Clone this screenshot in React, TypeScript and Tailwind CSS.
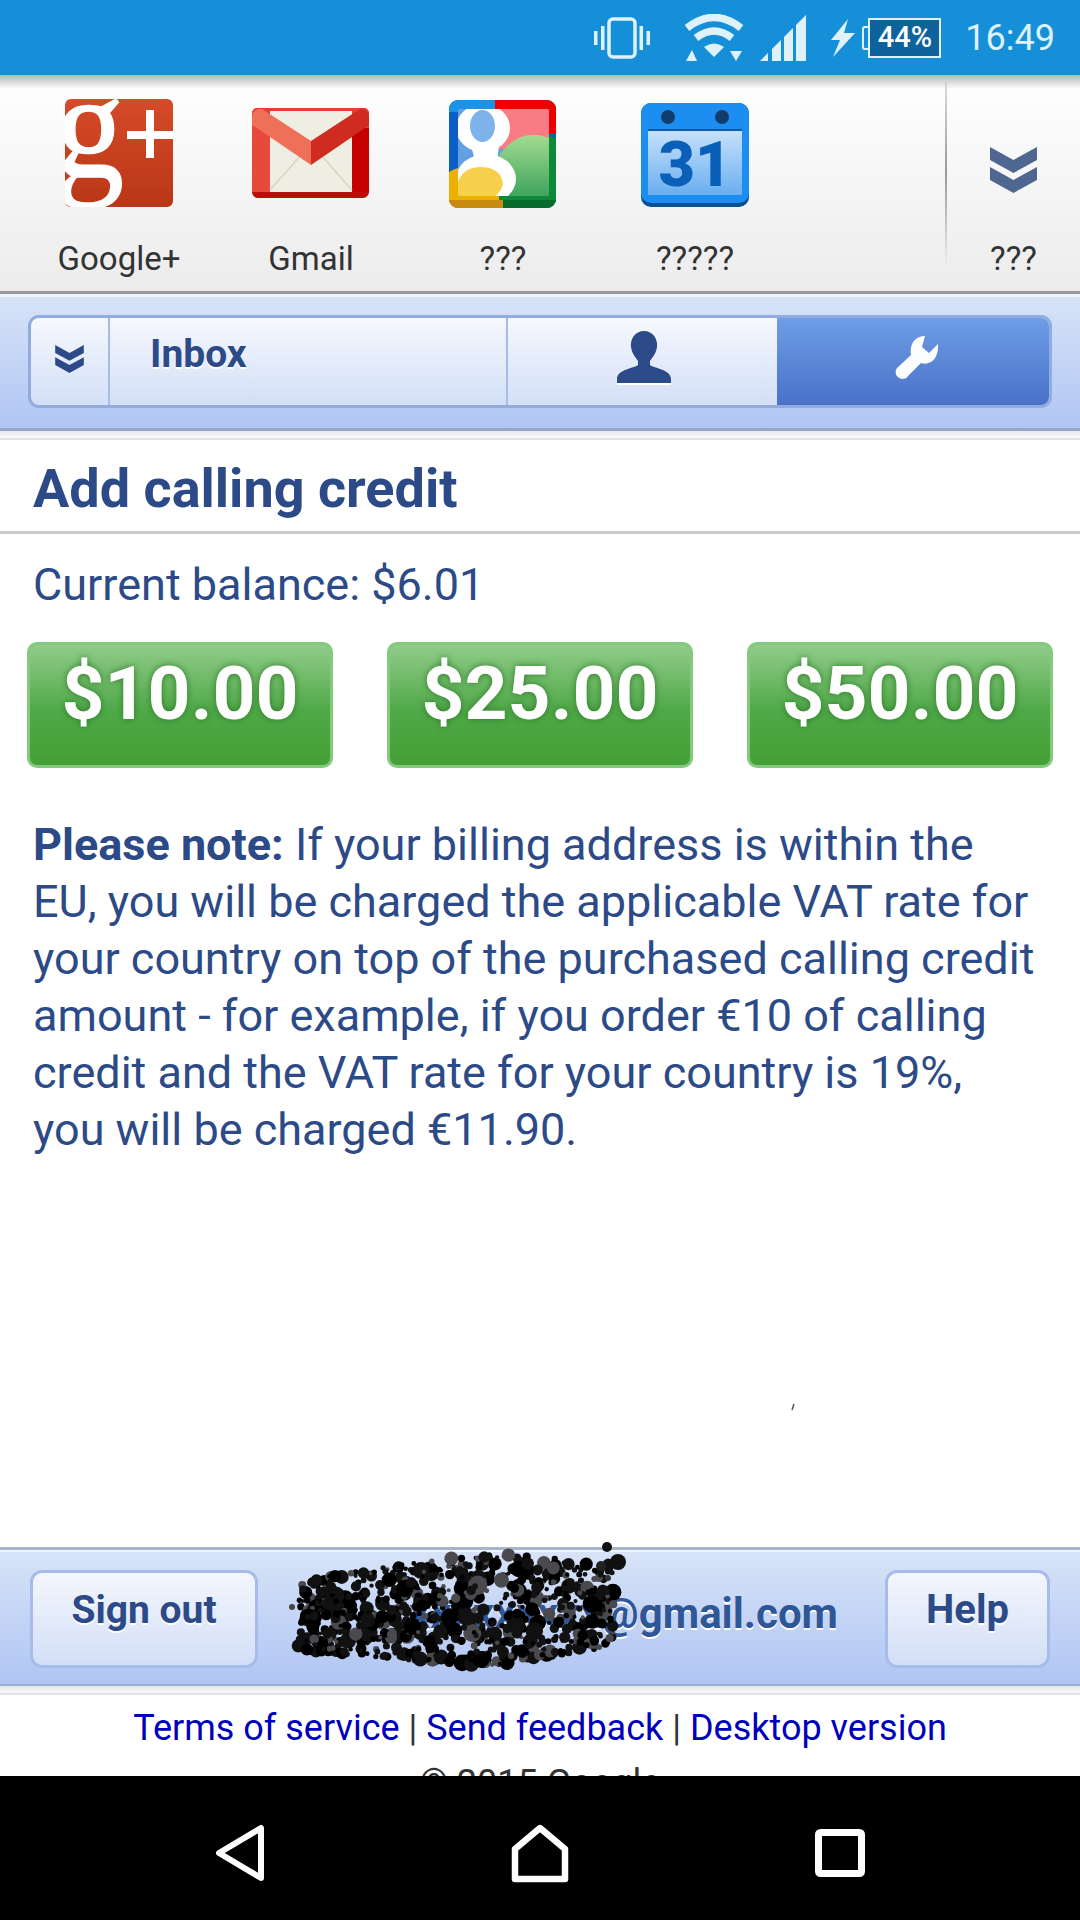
const font = { fontFamily: "Roboto, sans-serif" };

// speckle over the blacked out address, fixed seed so it never moves
function makeDots() {
  const dots: { x: number; y: number; r: number; fill: string }[] = [];
  let seed = 4711;
  const rnd = () => {
    seed = (seed * 1103515245 + 12345) & 0x7fffffff;
    return seed / 0x7fffffff;
  };
  for (let i = 0; i < 860; i++) {
    const x = 298 + rnd() * 316;
    const band = 1 - Math.abs((x - 480) / 180);
    const mid = 1616 - (x - 298) * 0.035;
    const y = mid + (rnd() - 0.5) * (70 + band * 46);
    const r = 2 + rnd() * rnd() * 8;
    const fill = rnd() > 0.84 ? "#4a4a4e" : rnd() > 0.5 ? "#111" : "#000";
    dots.push({ x, y, r, fill });
  }
  return dots;
}
const dots = makeDots();

function StatusBar() {
  return (
    <div className="h-[75px] bg-[#1590d8] flex items-center justify-end pr-[25px] text-[#dff1fb] shrink-0">
      <svg width="56" height="42" viewBox="0 0 56 42" fill="none">
        <rect x="15" y="2" width="26" height="38" rx="4" stroke="#dff1fb" strokeWidth="3.5" />
        <rect x="0" y="14" width="3.5" height="14" fill="#dff1fb" />
        <rect x="7" y="9" width="3.5" height="24" fill="#dff1fb" />
        <rect x="45.5" y="9" width="3.5" height="24" fill="#dff1fb" />
        <rect x="52.5" y="14" width="3.5" height="14" fill="#dff1fb" />
      </svg>
      <svg className="ml-[34px]" width="60" height="48" viewBox="0 0 60 48" fill="none">
        <path d="M3 14 Q30 -7 57 14" stroke="#dff1fb" strokeWidth="7.5" />
        <path d="M12 24 Q30 10 48 24" stroke="#dff1fb" strokeWidth="7.5" />
        <path d="M20 33 Q30 26 40 33 L30 43 Z" fill="#dff1fb" />
        <path d="M2 47 L8 36 L13 47 Z M46 37 L58 37 L52 47 Z" fill="#dff1fb" />
      </svg>
      <svg className="ml-[16px]" width="46" height="46" viewBox="0 0 46 46">
        <path d="M0 46 L8 38 V46 Z" fill="#dff1fb" />
        <path d="M12 34 L21 25 V46 H12 Z" fill="#dff1fb" />
        <path d="M24 22 L33 13 V46 H24 Z" fill="#dff1fb" />
        <path d="M36 10 L46 0 V46 H36 Z" fill="#dff1fb" />
      </svg>
      <svg className="ml-[25px]" width="24" height="38" viewBox="0 0 24 38">
        <path d="M17 0 L0 21 H9 L2 38 L24 14 H13 Z" fill="#dff1fb" />
      </svg>
      <div className="ml-[7px] flex items-center">
        <div className="w-[6px] h-[24px] border-2 border-r-0 border-[#dff1fb] rounded-l-[3px]" />
        <div className="w-[73px] h-[40px] border-2 border-[#dff1fb] bg-[#0f639d] flex items-center justify-center text-[29px] font-medium text-white">
          44%
        </div>
      </div>
      <div className="ml-[24px] text-[36px] leading-none">16:49</div>
    </div>
  );
}

function GooglePlusIcon() {
  return (
    <svg width="108" height="108" viewBox="0 0 108 108">
      <defs>
        <linearGradient id="gp" x1="0" y1="0" x2="0" y2="1">
          <stop offset="0" stopColor="#d64a28" />
          <stop offset="1" stopColor="#b93716" />
        </linearGradient>
        <clipPath id="gpc">
          <rect width="108" height="108" rx="6" />
        </clipPath>
      </defs>
      <rect width="108" height="108" rx="6" fill="url(#gp)" />
      <g clipPath="url(#gpc)">
        <text x="0" y="0" transform="translate(-10 78) scale(0.92 1)" fontFamily="Liberation Serif" fontSize="150" stroke="#fff" strokeWidth="1.5" fill="#fff">g</text>
        <rect x="62" y="32" width="46" height="8" fill="#fff" />
        <rect x="81" y="11" width="8" height="48" fill="#fff" />
      </g>
    </svg>
  );
}

function GmailIcon() {
  return (
    <svg width="118" height="90" viewBox="0 0 118 90">
      <rect x="0" y="0" width="117" height="90" rx="6" fill="#b70f0a" />
      <rect x="0" y="0" width="117" height="84" rx="5" fill="#e53f30" />
      <rect x="100" y="20" width="17" height="64" fill="#c40000" />
      <rect x="0" y="16" width="18" height="68" fill="#e64a3a" />
      <rect x="18" y="3" width="82" height="81" fill="#eeeee2" />
      <path d="M18 82 L50 46 M100 82 L68 46" stroke="#d6d6c6" strokeWidth="1.5" />
      <path d="M59 33 L108 1 Q117 0 117 10 V17 L100 29 L59 57 Z" fill="#d02b20" />
      <path d="M0 10 Q0 0 10 1 L59 33 V57 L18 29 L0 17 Z" fill="#ee7058" />
    </svg>
  );
}

function GoogleIcon() {
  return (
    <svg width="108" height="108" viewBox="0 0 108 108">
      <defs>
        <clipPath id="gc">
          <rect width="107" height="108" rx="9" />
        </clipPath>
        <clipPath id="gi">
          <rect x="9" y="9" width="91" height="87" rx="2" />
        </clipPath>
        <linearGradient id="gg" x1="0" y1="0" x2="0" y2="1">
          <stop offset="0" stopColor="#a4dc90" />
          <stop offset="1" stopColor="#3ea45c" />
        </linearGradient>
      </defs>
      <g clipPath="url(#gc)">
        <rect width="108" height="108" fill="#0a5fc4" />
        <path d="M0 0 H50 L46 12 H0 Z" fill="#1d93e6" />
        <path d="M46 0 H108 V34 L46 34 Z" fill="#ee0000" />
        <path d="M0 72 Q18 62 34 68 L56 100 L50 108 H0 Z" fill="#eeb000" />
        <path d="M50 56 Q72 26 108 38 V108 H50 Z" fill="#0c8a3a" />
        <rect x="0" y="100" width="54" height="8" fill="#c98a10" />
        <rect x="54" y="100" width="54" height="8" fill="#066b2c" />
      </g>
      <g clipPath="url(#gi)">
        <rect x="9" y="9" width="91" height="87" fill="#649fe4" />
        <rect x="50" y="9" width="50" height="40" fill="#f97b84" />
        <path d="M48 58 Q70 26 100 38 V96 H48 Z" fill="url(#gg)" />
        <ellipse cx="34" cy="28" rx="27" ry="24" fill="#fff" />
        <path d="M22 46 H50 L48 60 H26 Z" fill="#fff" />
        <ellipse cx="37" cy="79" rx="30" ry="25" fill="#fff" />
        <ellipse cx="33.5" cy="26" rx="12.5" ry="16" fill="#7db3ea" />
        <path d="M8 96 V84 Q14 67 31 67 Q52 67 54 84 Q52 92 46 96 Z" fill="#f6d04d" />
      </g>
    </svg>
  );
}

function CalendarIcon() {
  return (
    <svg className="mt-[4px]" width="108" height="104" viewBox="0 0 108 104">
      <defs>
        <linearGradient id="cal" x1="0" y1="0" x2="0" y2="1">
          <stop offset="0" stopColor="#c8e2fb" />
          <stop offset="1" stopColor="#69aef0" />
        </linearGradient>
      </defs>
      <rect width="108" height="104" rx="10" fill="#0a4f92" />
      <rect width="108" height="100" rx="10" fill="#1c8ef2" />
      <rect x="7" y="27" width="94" height="65" fill="url(#cal)" />
      <rect x="7" y="26" width="94" height="2" fill="#0d5fa8" />
      <circle cx="27" cy="14" r="7" fill="#113d6e" />
      <circle cx="81" cy="14" r="7" fill="#113d6e" />
      <text x="54" y="83" textAnchor="middle" fontFamily="Roboto" fontWeight="900" fontSize="63" fill="#0a5fb8">31</text>
    </svg>
  );
}

function Chevrons({ w, h, color }: { w: number; h: number; color: string }) {
  return (
    <svg width={w} height={h} viewBox="0 0 47 46">
      <path d="M0 0 L23.5 13 L47 0 V13 L23.5 26 L0 13 Z" fill={color} />
      <path d="M0 20 L23.5 33 L47 20 V33 L23.5 46 L0 33 Z" fill={color} />
    </svg>
  );
}

function AppItem({ label, icon, w }: { label: string; icon: React.ReactNode; w: string }) {
  return (
    <div className={`flex flex-col items-center shrink-0 ${w}`}>
      <div className="h-[132px] pt-[12px] flex items-start">{icon}</div>
      <div className="text-[33px] leading-[40px] text-[#333] mt-[20px]">{label}</div>
    </div>
  );
}

function AppBar() {
  return (
    <div className="h-[216px] shrink-0 relative bg-gradient-to-b from-[#fff] to-[#ececec] flex pl-[23px] pt-[12px]">
      <div className="absolute inset-x-0 top-0 h-[14px] bg-gradient-to-b from-[#b5b5b5] to-[#ffffff00]" />
      <AppItem label="Google+" icon={<GooglePlusIcon />} w="w-[192px]" />
      <AppItem label="Gmail" icon={<div className="pt-[9px]"><GmailIcon /></div>} w="w-[192px]" />
      <AppItem label="???" icon={<div className="pt-[1px]"><GoogleIcon /></div>} w="w-[192px]" />
      <AppItem label="?????" icon={<CalendarIcon />} w="w-[192px]" />
      <div className="w-[2px] h-[184px] ml-[154px] -mt-[5px] bg-gradient-to-b from-[#ddd] via-[#999] to-[#eee]" />
      <div className="flex flex-col items-center w-[134px]">
        <div className="h-[132px] pt-[60px]">
          <Chevrons w={47} h={46} color="#4f6691" />
        </div>
        <div className="text-[33px] leading-[40px] text-[#333] mt-[20px]">???</div>
      </div>
    </div>
  );
}

function NavTabs() {
  return (
    <div className="shrink-0 border-t-[3px] border-[#9a9a9a]">
      <div className="h-[3px] bg-[#eef2fb]" />
      <div className="h-[134px] border-b-[3px] border-[#97a6c4] bg-gradient-to-b from-[#d7e3f8] to-[#b0c5f3] px-[28px] pt-[18px]">
        <div className="h-[93px] flex rounded-[11px] border-[3px] border-[#93acdf] bg-gradient-to-b from-[#f6f8fd] to-[#d3dff7] overflow-hidden">
          <div className="w-[79px] flex items-center justify-center pb-[5px] border-r-2 border-[#a5bce8]">
            <Chevrons w={31} h={28} color="#2c4a87" />
          </div>
          <div className="w-[398px] pl-[40px] pt-[12px] text-[39px] leading-[48px] font-bold text-[#2c4a87] [text-shadow:0_2px_0_#fff] border-r-2 border-[#a5bce8]">
            Inbox
          </div>
          <div className="w-[269px] flex items-center justify-center pb-[8px] pl-[3px]">
            <svg width="54" height="54" viewBox="0 0 54 54">
              <path d="M27 0 C36 0 41 8 40 16 C39 23 35 27 33 30 V34 C35 37 54 38 54 48 V52 H0 V48 C0 38 19 37 21 34 V30 C19 27 15 23 14 16 C13 8 18 0 27 0 Z" fill="#2c4a87" />
              <rect x="0" y="52" width="54" height="2" fill="#fff" />
            </svg>
          </div>
          <div className="flex-1 flex items-center justify-center pb-[8px] pl-[8px] bg-gradient-to-b from-[#6f9de6] to-[#4971c9]">
            <svg width="44" height="44" viewBox="0 0 44 44">
              <path d="M30 0 C21 0 14 7 16 19 L2 32 C-1 36 1 42 7 43 C10 43 12 42 13 40 L26 27 C36 30 44 22 43 8 L34 17 L27 11 Z" fill="#fbfdff" />
            </svg>
          </div>
        </div>
      </div>
    </div>
  );
}

function Amount({ value }: { value: string }) {
  return (
    <div className="w-[306px] h-[126px] rounded-[10px] border-[3px] border-[#85c97f] bg-gradient-to-b from-[#90cc89] via-[#4fa947] via-55% to-[#44a035] text-center text-white text-[75px] font-bold leading-[96px] [text-shadow:0_0_7px_#2f7a2a]">
      {value}
    </div>
  );
}

function Footer() {
  return (
    <div className="shrink-0">
      <div className="h-[3px] bg-[#a5b5cc]" />
      <div className="h-[2px] bg-[#eef2fb]" />
      <div className="relative h-[134px] border-b-2 border-[#a0afcd] bg-gradient-to-b from-[#d7e3f8] to-[#b0c5f3] flex items-start pl-[30px] pr-[30px] pt-[18px]">
        <div className="w-[228px] h-[98px] rounded-[12px] border-[3px] border-[#a6bdea] bg-gradient-to-b from-[#f3f6fd] to-[#d3dff7] text-center text-[39px] leading-[74px] font-bold text-[#2c4a87] [text-shadow:0_2px_0_#fff]">
          Sign out
        </div>
        <div className="w-[580px] text-right text-[42px] leading-[80px] pt-[4px] font-bold text-[#2f5696] [text-shadow:0_2px_0_#fff] overflow-hidden whitespace-nowrap">
          xxxxxxxxx@gmail.com
        </div>
        <div className="ml-[47px] w-[165px] h-[98px] rounded-[12px] border-[3px] border-[#a6bdea] bg-gradient-to-b from-[#f3f6fd] to-[#d3dff7] text-center text-[40px] leading-[74px] font-bold text-[#2c4a87] [text-shadow:0_2px_0_#fff]">
          Help
        </div>
      </div>
      <div className="h-[9px] bg-gradient-to-b from-[#e3e6ea] to-[#fafafa] border-b-2 border-[#e2e4e8]" />
    </div>
  );
}

export default function App() {
  return (
    <div className="relative w-[1080px] h-[1920px] bg-white overflow-hidden flex flex-col" style={font}>
      <StatusBar />
      <AppBar />
      <NavTabs />
      <div className="h-[9px] shrink-0 bg-gradient-to-b from-[#e6e8ec] to-[#fbfbfb] border-b-2 border-[#e2e4e8]" />
      <h1 className="h-[94px] shrink-0 border-b-[3px] border-[#cbcbcb] pl-[33px] pt-[11px] text-[54px] leading-[76px] font-bold text-[#2c4a87]">
        Add calling credit
      </h1>
      <div className="flex-1 min-h-0">
        <p className="pl-[33px] pt-[23px] text-[45px] leading-[56px] text-[#2c4a87]">Current balance: $6.01</p>
        <div className="flex justify-between px-[27px] mt-[29px]">
          <Amount value="$10.00" />
          <Amount value="$25.00" />
          <Amount value="$50.00" />
        </div>
        <p className="pl-[33px] pr-[40px] mt-[48px] text-[45px] leading-[57px] text-[#2c4a87]">
          <b>Please note:</b> If your billing address is within the EU, you will be charged the applicable VAT rate for
          your country on top of the purchased calling credit amount - for example, if you order €10 of calling credit
          and the VAT rate for your country is 19%, you will be charged €11.90.
        </p>
      </div>
      <Footer />
      <div className="h-[81px] shrink-0 overflow-hidden text-center text-[36px] leading-[44px] text-[#333]">
        <div className="pt-[11px]">
          <span className="text-[#0000bb]">Terms of service</span> | <span className="text-[#0000bb]">Send feedback</span> |{" "}
          <span className="text-[#0000bb]">Desktop version</span>
        </div>
        <div className="pt-[11px]">© 2015 Google</div>
      </div>
      <div className="h-[144px] shrink-0 bg-black grid grid-cols-3 px-[90px] pt-[10px] items-center justify-items-center">
        <svg width="50" height="58" viewBox="0 0 50 58" fill="none">
          <path d="M46 4 V54 L4 29 Z" stroke="#fff" strokeWidth="6" strokeLinejoin="round" />
        </svg>
        <svg width="58" height="60" viewBox="0 0 58 60" fill="none">
          <path d="M29 5 L54 26 V56 H4 V26 Z" stroke="#fff" strokeWidth="6.5" strokeLinejoin="round" />
        </svg>
        <svg width="50" height="48" viewBox="0 0 50 48" fill="none">
          <rect x="3.5" y="3.5" width="43" height="41" rx="2" stroke="#fff" strokeWidth="7" />
        </svg>
      </div>
      {/* scribble hiding the address */}
      <svg className="absolute inset-0 pointer-events-none" width="1080" height="1920" viewBox="0 0 1080 1920">
        {dots.map((d, i) => (
          <circle key={i} cx={d.x} cy={d.y} r={d.r} fill={d.fill} />
        ))}
        <circle cx="607" cy="1547" r="5" fill="#111" />
        <circle cx="618" cy="1562" r="8" fill="#111" />
        <circle cx="601" cy="1566" r="5" fill="#222" />
        <circle cx="606" cy="1591" r="4" fill="#111" />
        <circle cx="608" cy="1578" r="3" fill="#333" />
        <circle cx="292" cy="1607" r="3" fill="#444" />
        <path d="M794 1404 L792 1410" stroke="#555" strokeWidth="1.5" />
      </svg>
    </div>
  );
}
